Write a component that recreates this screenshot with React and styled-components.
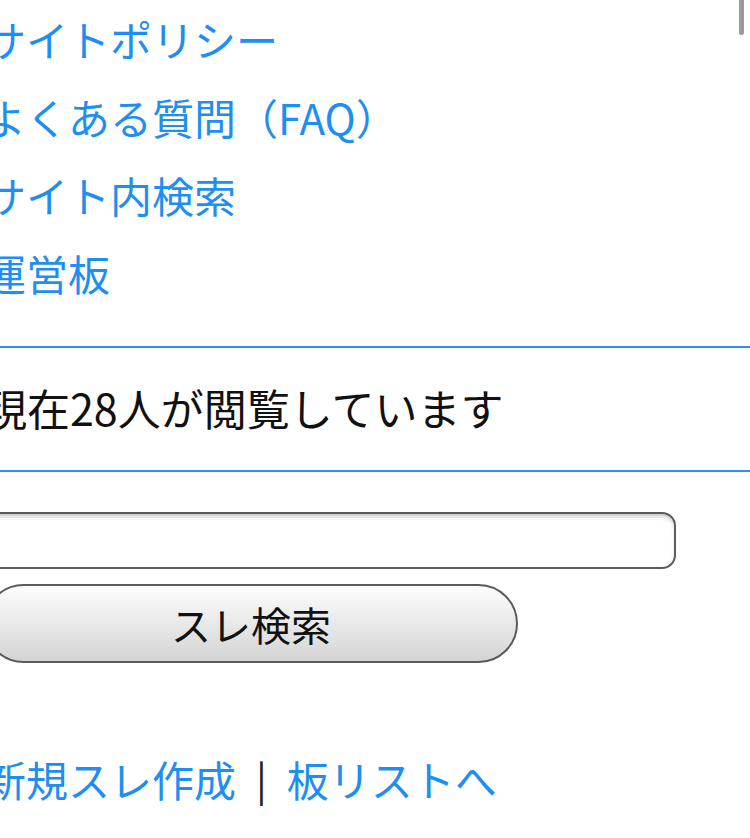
import React from "react";
import styled, { createGlobalStyle } from "styled-components";

const GlobalStyle = createGlobalStyle`
  html, body {
    margin: 0;
    padding: 0;
    background: #fff;
    overflow: hidden;
  }
  body {
    font-family: "Noto Sans CJK JP", "Noto Sans", sans-serif;
  }
`;

const menu = ["サイトポリシー", "よくある質問（FAQ）", "サイト内検索", "運営板"];

const App = () => {
  return (
    <>
      <GlobalStyle />
      <Page>
        <Menu>
          {menu.map((label) => (
            <MenuLink key={label} href="#">
              {label}
            </MenuLink>
          ))}
        </Menu>
        <Status>現在28人が閲覧しています</Status>
        <SearchForm onSubmit={(e) => e.preventDefault()}>
          <SearchInput type="text" />
          <SearchButton type="submit">スレ検索</SearchButton>
        </SearchForm>
        <Footer>
          <FootLink href="#">新規スレ作成</FootLink>
          <Sep>|</Sep>
          <FootLink href="#">板リストへ</FootLink>
        </Footer>
      </Page>
      <ScrollThumb />
    </>
  );
};

export default App;

const Page = styled.div`
  margin-left: -16px;
  display: flex;
  flex-direction: column;
`;

const Menu = styled.nav`
  display: flex;
  flex-direction: column;
`;

const MenuLink = styled.a`
  display: block;
  height: 78px;
  line-height: 78px;
  font-size: 42px;
  color: #1f8ef1;
  text-decoration: none;
  white-space: nowrap;
`;

const Status = styled.div`
  margin-top: 34px;
  border-top: 2px solid #2f8fef;
  border-bottom: 2px solid #2f8fef;
  padding: 38px 0 42px;
  line-height: 42px;
  font-size: 43px;
  color: #111;
  white-space: nowrap;
`;

const SearchForm = styled.form`
  margin: 40px 0 0;
  display: flex;
  flex-direction: column;
  gap: 15px;
`;

const SearchInput = styled.input`
  box-sizing: border-box;
  width: 692px;
  height: 57px;
  border: 2px solid #5c5c5c;
  border-radius: 14px;
  background: #fff;
  box-shadow: inset 0 4px 5px -2px rgba(0, 0, 0, 0.25);
  outline: none;
  font-size: 36px;
  padding: 0 16px;
`;

const SearchButton = styled.button`
  box-sizing: border-box;
  width: 534px;
  height: 79px;
  border: 2px solid #5a5a5a;
  border-radius: 40px;
  background: linear-gradient(#fdfdfd, #d4d4d4);
  font-family: "Noto Sans CJK JP", sans-serif;
  font-size: 40px;
  color: #111;
  padding: 0;
`;

const Footer = styled.div`
  margin-top: 76px;
  display: flex;
  align-items: center;
  height: 78px;
  font-size: 42px;
  white-space: nowrap;
`;

const FootLink = styled.a`
  color: #1f8ef1;
  text-decoration: none;
`;

const Sep = styled.span`
  color: #222;
  padding: 0 20px;
  font-size: 40px;
`;

const ScrollThumb = styled.div`
  position: fixed;
  top: 0;
  right: 6px;
  width: 5px;
  height: 35px;
  border-radius: 0 0 3px 3px;
  background: #9a9a9a;
`;
